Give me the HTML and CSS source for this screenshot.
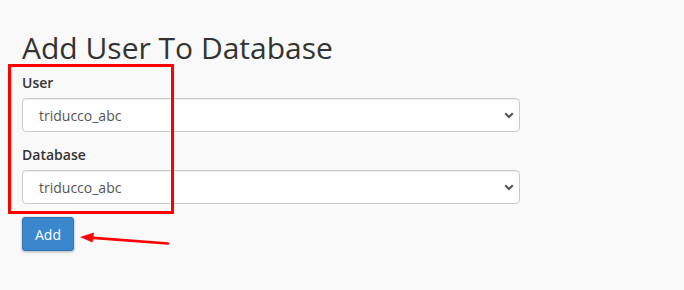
FILE: index.html
```html
<!DOCTYPE html>
<html>
<head>
<meta charset="utf-8">
<link rel="stylesheet" href="styles.css">
</head>
<body>
<div class="page">
  <h1 class="title">Add User To Database</h1>
  <div class="form-group">
    <label class="label" for="user">User</label>
    <div class="select-wrap">
      <select id="user" class="select"><option>triducco_abc</option></select>
      <svg class="chevron" width="10" height="7" viewBox="0 0 10 7"><path d="M1.2 1.3 L5 5 L8.8 1.3" fill="none" stroke="#555" stroke-width="2.2"/></svg>
    </div>
  </div>
  <div class="form-group">
    <label class="label" for="db">Database</label>
    <div class="select-wrap">
      <select id="db" class="select"><option>triducco_abc</option></select>
      <svg class="chevron" width="10" height="7" viewBox="0 0 10 7"><path d="M1.2 1.3 L5 5 L8.8 1.3" fill="none" stroke="#555" stroke-width="2.2"/></svg>
    </div>
  </div>
  <button class="btn">Add</button>
</div>
<div class="highlight"></div>
<svg class="arrow" width="100" height="20" viewBox="0 0 100 20">
  <path d="M98 15.5 L20 9.6" stroke="#f00" stroke-width="2.6" fill="none" stroke-linecap="round"/>
  <path d="M10 9 L24 4.5 L22.5 14.5 Z" fill="#f00"/>
</svg>
</body>
</html>
```
FILE: styles.css
```css
html, body {
  margin: 0;
  padding: 0;
  background: #f9f9f9;
}
body {
  font-family: "Open Sans", "Liberation Sans", sans-serif;
  color: #333;
  position: relative;
  width: 684px;
  height: 290px;
  overflow: hidden;
}
.page {
  padding: 31px 0 0 22px;
  width: 498px;
}
.title {
  font-size: 30px;
  font-weight: 400;
  line-height: 33px;
  margin: 0 0 9px;
  color: #333;
}
.form-group {
  margin-bottom: 13px;
  display: flex;
  flex-direction: column;
}
.label {
  font-size: 14px;
  font-weight: 600;
  line-height: 20px;
  margin-bottom: 5px;
  color: #333;
}
.select-wrap {
  position: relative;
  height: 34px;
}
.select {
  appearance: none;
  -webkit-appearance: none;
  width: 498px;
  height: 34px;
  box-sizing: border-box;
  border: 1px solid #ccc;
  border-radius: 4px;
  background: #fff;
  padding: 0 30px 0 16px;
  font-family: "Open Sans", "Liberation Sans", sans-serif;
  font-size: 14px;
  color: #555;
  box-shadow: inset 0 1px 1px rgba(0,0,0,0.075);
}
.chevron {
  position: absolute;
  right: 6px;
  top: 14px;
}
.btn {
  display: block;
  margin-top: 3px;
  height: 34px;
  padding: 0 12px;
  border: 1px solid #2f75b5;
  border-radius: 3px;
  background: #3a87cd;
  color: #fff;
  font-family: "Open Sans", "Liberation Sans", sans-serif;
  font-size: 14px;
  font-weight: 400;
  box-shadow: 0 1px 3px rgba(0,0,0,0.3);
}
.highlight {
  position: absolute;
  left: 8px;
  top: 64px;
  width: 160px;
  height: 144px;
  border: 3px solid #f00;
}
.arrow {
  position: absolute;
  left: 70px;
  top: 228px;
}
```
